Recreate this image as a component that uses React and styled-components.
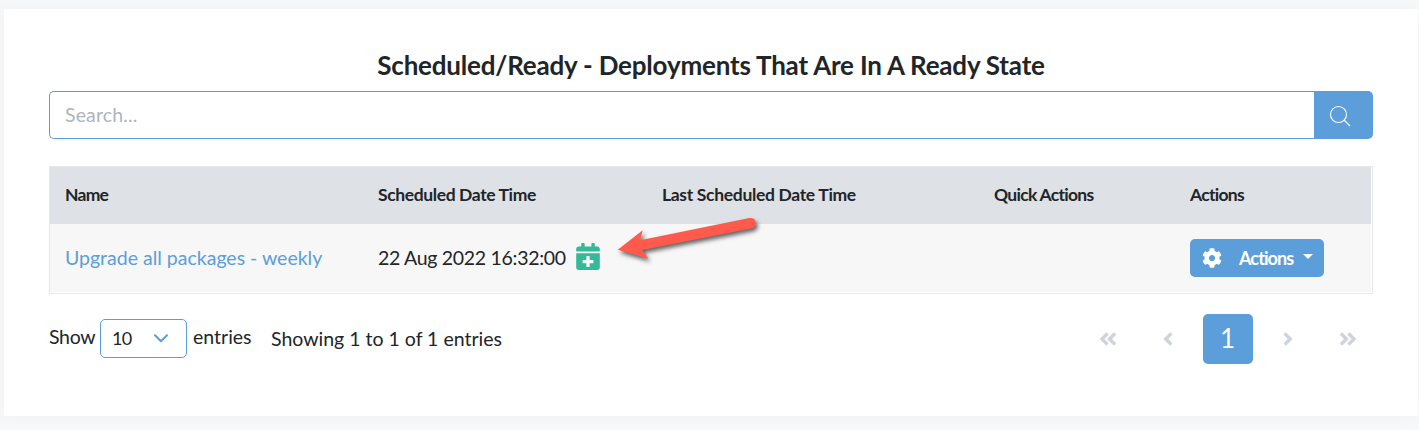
import React from "react";
import styled, { createGlobalStyle, css } from "styled-components";
import {
  FaAngleDoubleLeft,
  FaAngleDoubleRight,
  FaAngleLeft,
  FaAngleRight,
  FaCalendarPlus,
  FaCog,
} from "react-icons/fa";

const blue = "#5c9ed9";

const GlobalStyle = createGlobalStyle`
  *, *::before, *::after { box-sizing: border-box; }
  body {
    margin: 0;
    background: #f7f8fa;
    color: #212529;
    font-family: Lato, "Noto Sans", sans-serif;
    font-size: 19.5px;
    font-variant-ligatures: none;
    line-height: 28px;
    overflow: hidden;
  }
  button, input { font: inherit; letter-spacing: inherit; }
`;

const Page = styled.div`
  height: 430px;
  padding: 9px 1px 14px 4px;
`;

const Card = styled.main`
  position: relative;
  height: 407px;
  padding: 39px 45px 0;
  background: #fff;
  box-shadow: 0 0 14px rgba(120, 130, 140, 0.06);
`;

const Title = styled.h1`
  margin: 0;
  height: 43px;
  font-size: 26px;
  font-weight: 700;
  line-height: 34px;
  letter-spacing: -0.2px;
  text-align: center;
  white-space: nowrap;
`;

const SearchBar = styled.form`
  display: flex;
  height: 48px;
  margin-bottom: 27px;
`;

const SearchInput = styled.input`
  flex: 1;
  padding: 0 15px 0;
  border: 1px solid ${blue};
  border-right: 0;
  border-radius: 5px 0 0 5px;
  outline: 0;
  letter-spacing: 0.15px;
  &::placeholder { color: #adb5bd; opacity: 1; }
`;

const SearchButton = styled.button`
  display: flex;
  align-items: center;
  width: 59px;
  padding: 2px 0 0 15px;
  border: 0;
  border-radius: 0 5px 5px 0;
  background: ${blue};
`;

const columns = css`
  display: grid;
  grid-template-columns: 313px 284px 332px 196px 1fr;
  align-items: center;
  padding-left: 15px;
`;

const Table = styled.section`
  height: 128px;
  padding-right: 1px;
  border: 1px solid #e6e9ec;
`;

const HeaderRow = styled.div`
  ${columns}
  height: 57px;
  padding-bottom: 2px;
  background: #dee1e6;
`;

const HeaderCell = styled.div`
  font-size: 17.5px;
  font-weight: 700;
  white-space: nowrap;
  letter-spacing: ${(p) => p.$spacing || 0}px;
`;

const BodyRow = styled.div`
  ${columns}
  height: 68px;
  background: #f7f7f7;
`;

const NameLink = styled.a`
  color: ${blue};
  white-space: nowrap;
`;

const DateCell = styled.div`
  display: flex;
  align-items: center;
  white-space: nowrap;
`;

const DateText = styled.span`
  width: 198px;
  letter-spacing: -0.3px;
`;

const CalendarIcon = styled(FaCalendarPlus)`
  width: 24px;
  height: 27px;
  margin-top: -3px;
  color: #35b998;
`;

const ActionsCell = styled.div`
  grid-column: 5;
`;

const ActionsButton = styled.button`
  display: flex;
  align-items: center;
  width: 134px;
  height: 38px;
  padding: 0 11px 0 12px;
  border: 0;
  border-radius: 5px;
  background: ${blue};
  color: #fff;
  font-size: 18px;
  font-weight: 700;
`;

const ActionsLabel = styled.span`
  width: 64px;
  flex: none;
  margin-left: 17px;
  letter-spacing: -0.9px;
  text-align: left;
`;

const Caret = styled.span`
  flex: none;
  border: 5px solid transparent;
  border-top-color: #fff;
  border-bottom: 0;
  margin-top: -3px;
`;

const Footer = styled.footer`
  display: flex;
  justify-content: space-between;
  padding-top: 20px;
`;

const Entries = styled.div`
  display: flex;
  padding-top: 5px;
  white-space: nowrap;
`;

const EntriesText = styled.span`
  width: ${(p) => p.$width}px;
  padding-top: ${(p) => p.$top}px;
  letter-spacing: ${(p) => p.$spacing || 0}px;
`;

const PageSize = styled.button`
  display: flex;
  align-items: center;
  justify-content: space-between;
  width: 87px;
  height: 39px;
  margin-right: 6px;
  padding: 0 18px 2px 11px;
  border: 1px solid ${blue};
  border-radius: 5px;
  background: #fff;
  color: #212529;
  font-size: 18px;
  letter-spacing: -0.6px;

  svg { margin-top: 2px; }
`;

const Pagination = styled.nav`
  display: flex;
  gap: 10px;
`;

const PageButton = styled.button`
  display: flex;
  align-items: center;
  justify-content: center;
  width: 50px;
  height: 50px;
  padding: ${(p) => (p.$active ? "0 1px 2px 0" : "0 1px 0 0")};
  border: 0;
  border-radius: 5px;
  background: ${(p) => (p.$active ? blue : "transparent")};
  color: ${(p) => (p.$active ? "#fff" : "#ced4da")};
  font-size: ${(p) => (p.$active ? 26 : 20)}px;

  svg { stroke: currentColor; stroke-width: 12px; }
`;

const Arrow = styled.svg`
  position: absolute;
  left: 606px;
  top: 201px;
  filter: drop-shadow(2px 3px 2px rgba(0, 0, 0, 0.6));
`;

export default function App() {
  return (
    <Page>
      <GlobalStyle />
      <Card>
        <Title>Scheduled/Ready - Deployments That Are In A Ready State</Title>
        <SearchBar>
          <SearchInput placeholder="Search..." aria-label="Search" />
          <SearchButton type="button" aria-label="Search">
            <svg width="22" height="22" viewBox="0 0 22 22" fill="none" stroke="#fff" strokeWidth="1.1">
              <circle cx="9.5" cy="9.5" r="8" />
              <path d="M15 15L21 21" />
            </svg>
          </SearchButton>
        </SearchBar>
        <Table>
          <HeaderRow>
            <HeaderCell $spacing={-0.75}>Name</HeaderCell>
            <HeaderCell $spacing={-0.38}>Scheduled Date Time</HeaderCell>
            <HeaderCell $spacing={-0.32}>Last Scheduled Date Time</HeaderCell>
            <HeaderCell $spacing={-0.72}>Quick Actions</HeaderCell>
            <HeaderCell $spacing={-0.7}>Actions</HeaderCell>
          </HeaderRow>
          <BodyRow>
            <NameLink>Upgrade all packages - weekly</NameLink>
            <DateCell>
              <DateText>22 Aug 2022 16:32:00</DateText>
              <CalendarIcon />
            </DateCell>
            <ActionsCell>
              <ActionsButton>
                <FaCog size={20} />
                <ActionsLabel>Actions</ActionsLabel>
                <Caret />
              </ActionsButton>
            </ActionsCell>
          </BodyRow>
        </Table>
        <Footer>
          <Entries>
            <EntriesText $width={51} $top={4} $spacing={-0.3}>Show</EntriesText>
            <PageSize>
              10
              <svg width="14" height="9" viewBox="0 0 14 9" fill="none" stroke={blue} strokeWidth="2" strokeLinecap="round" strokeLinejoin="round">
                <path d="M1 1.2L7 7.2L13 1.2" />
              </svg>
            </PageSize>
            <EntriesText $width={78} $top={4}>entries</EntriesText>
            <EntriesText $width={240} $top={6}>Showing 1 to 1 of 1 entries</EntriesText>
          </Entries>
          <Pagination>
            <PageButton aria-label="First"><FaAngleDoubleLeft /></PageButton>
            <PageButton aria-label="Previous"><FaAngleLeft /></PageButton>
            <PageButton $active>1</PageButton>
            <PageButton aria-label="Next"><FaAngleRight /></PageButton>
            <PageButton aria-label="Last"><FaAngleDoubleRight /></PageButton>
          </Pagination>
        </Footer>
        <Arrow width="156" height="60" viewBox="610 210 156 60">
          <path
            d="M617.7 249.7L642.7 230.3L640 240.3L749.5 218.1A5.2 5.2 0 0 1 752 228.2L642 250L648.3 258.7Z"
            fill="#ff5a4c"
          />
        </Arrow>
      </Card>
    </Page>
  );
}
